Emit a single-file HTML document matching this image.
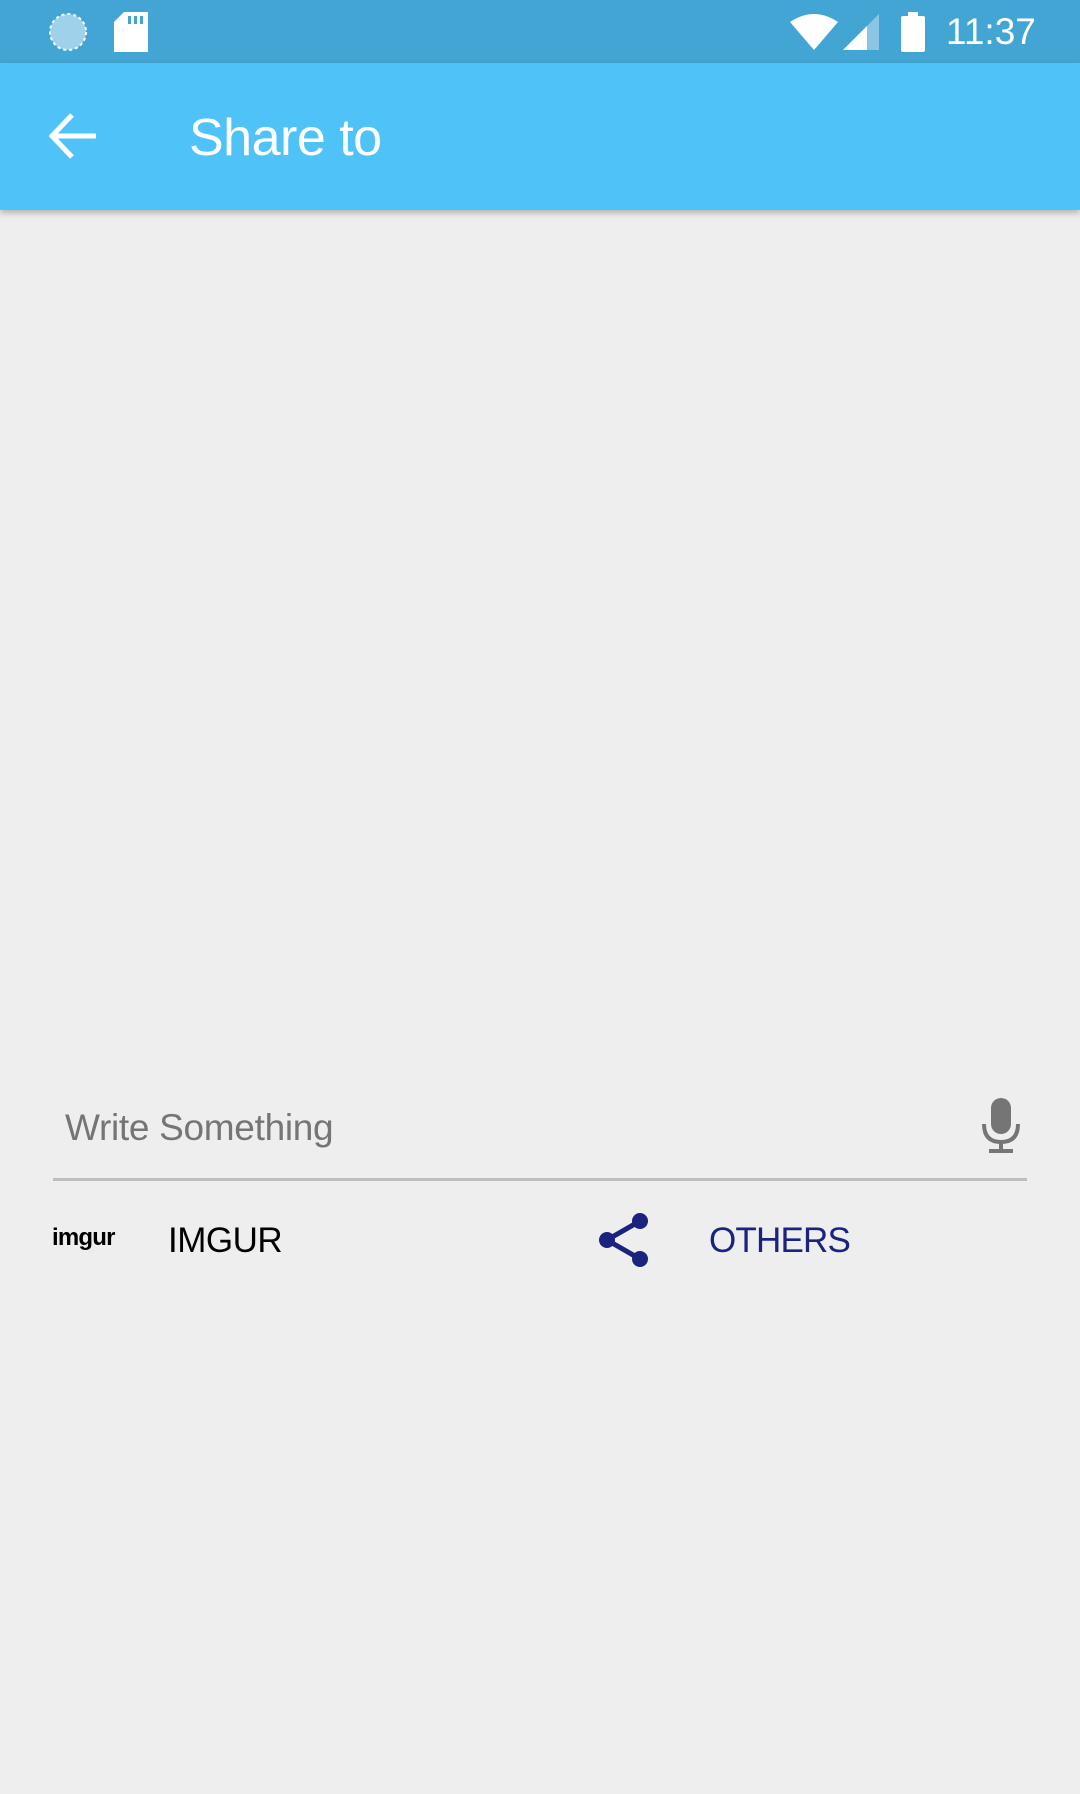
<!DOCTYPE html>
<html><head><meta charset="utf-8"><style>
*{margin:0;padding:0;box-sizing:border-box}
body{width:1080px;height:1794px;background:#eeeeee;position:relative;overflow:hidden;font-family:"Liberation Sans",sans-serif}
.abs{position:absolute}
#sb{left:0;top:0;width:1080px;height:63px;background:#43a5d3}
#tb{left:0;top:63px;width:1080px;height:147px;background:#4fc3f7;box-shadow:0 3px 6px rgba(0,0,0,0.25)}
</style></head><body>
<div id="sb" class="abs">
  <svg class="abs" style="left:48px;top:12px" width="40" height="40"><circle cx="20" cy="20" r="18" fill="#9fd2ea"/><circle cx="20" cy="20" r="18" fill="none" stroke="#fff" stroke-width="2" stroke-dasharray="3 3"/></svg>
  <svg class="abs" style="left:114px;top:12px" width="34" height="40"><path d="M10 0H34V40H0V10Z" fill="#fff"/><rect x="14" y="4" width="3" height="8" fill="#43a5d3"/><rect x="20" y="4" width="3" height="8" fill="#43a5d3"/><rect x="26" y="4" width="3" height="8" fill="#43a5d3"/></svg>
  <svg class="abs" style="left:790px;top:12px" width="48" height="40"><path d="M0 10 Q24 -6 48 10 L24 38Z" fill="#fff"/></svg>
  <svg class="abs" style="left:843px;top:14px" width="36" height="36"><path d="M36 0V36H0Z" fill="#8ac6e3"/><path d="M24 12V36H0Z" fill="#fff"/></svg>
  <svg class="abs" style="left:901px;top:12px" width="24" height="40"><rect x="7" y="0" width="10" height="4" fill="#fff"/><rect x="0" y="4" width="24" height="36" rx="2" fill="#fff"/></svg>
  <div class="abs" style="left:946px;top:12px;font-size:37px;color:#fff;line-height:40px">11:37</div>
</div>
<div id="tb" class="abs">
  <svg class="abs" style="left:48px;top:49px" width="50" height="48" viewBox="0 0 50 48"><path d="M4 24H48M24 3L4 24L24 45" fill="none" stroke="#fff" stroke-width="5"/></svg>
  <div class="abs" style="left:189px;top:45px;font-size:52px;color:#fff;line-height:60px;letter-spacing:-0.5px">Share to</div>
</div>
<div class="abs" style="left:65px;top:1105px;font-size:37px;color:#757575;line-height:46px;letter-spacing:-0.3px">Write Something</div>
<svg class="abs" style="left:981px;top:1098px" width="40" height="56" viewBox="0 0 40 56"><rect x="10" y="0" width="20" height="36" rx="10" fill="#757575"/><path d="M3 26Q3 44 20 44Q37 44 37 26" fill="none" stroke="#757575" stroke-width="4"/><rect x="18" y="44" width="4" height="8" fill="#757575"/><rect x="8" y="51" width="24" height="4" fill="#757575"/></svg>
<div class="abs" style="left:53px;top:1178px;width:974px;height:3px;background:#bdbdbd"></div>
<div class="abs" style="left:52px;top:1223px;font-size:24px;font-weight:bold;color:#000;letter-spacing:-0.8px;line-height:30px">imgur</div>
<div class="abs" style="left:168px;top:1220px;font-size:35px;color:#000;line-height:42px;letter-spacing:-0.5px">IMGUR</div>
<svg class="abs" style="left:598px;top:1212px" width="54" height="56" viewBox="0 0 54 56"><path d="M42 9L9 28L42 47" fill="none" stroke="#1a237e" stroke-width="5"/><circle cx="42" cy="9" r="8" fill="#1a237e"/><circle cx="9" cy="28" r="8" fill="#1a237e"/><circle cx="42" cy="47" r="8" fill="#1a237e"/></svg>
<div class="abs" style="left:709px;top:1220px;font-size:35px;color:#1a237e;line-height:42px;letter-spacing:-0.8px">OTHERS</div>
</body></html>
